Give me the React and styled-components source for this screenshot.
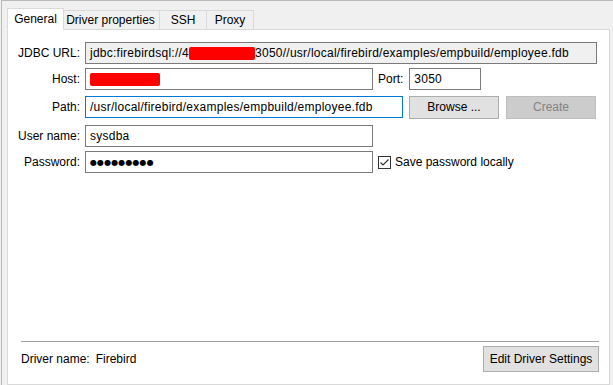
import styled, { createGlobalStyle } from "styled-components";

const GlobalStyle = createGlobalStyle`
  html, body {
    margin: 0;
    padding: 0;
    background: #f0f0f0;
    font-family: "Liberation Sans", Arial, sans-serif;
    font-size: 12px;
    color: #000;
  }
`;

const Frame = styled.div`
  width: 613px;
  height: 385px;
  box-sizing: border-box;
  border-top: 1px solid #b9b9b9;
  border-left: 1px solid #b9b9b9;
  margin-left: 1px;
  padding: 7px 4px 0 5px;
  display: flex;
  flex-direction: column;
  overflow: hidden;
`;

const TabStrip = styled.div`
  display: flex;
  align-items: flex-end;
  height: 22px;
  position: relative;
  z-index: 1;
  margin-bottom: -1px;
`;

const Tab = styled.div`
  box-sizing: border-box;
  height: ${(p) => (p.$active ? "22px" : "20px")};
  width: ${(p) => p.$w}px;
  padding: ${(p) => (p.$active ? "3px 0 0 0" : "2px 0 0 0")};
  text-align: center;
  border: 1px solid #d9d9d9;
  border-bottom: ${(p) => (p.$active ? "1px solid #fff" : "1px solid #d9d9d9")};
  border-left: ${(p) => (p.$first || p.$active ? "1px solid #d9d9d9" : "none")};
  background: ${(p) => (p.$active ? "#fff" : "#f0f0f0")};
  margin-right: ${(p) => (p.$active ? "-2px" : "0")};
  position: relative;
  z-index: ${(p) => (p.$active ? 2 : 1)};
`;

const Panel = styled.div`
  flex: 1;
  background: #fff;
  border: 1px solid #d9d9d9;
  display: flex;
  flex-direction: column;
  padding: 12px 0 0 0;
`;

const Form = styled.div`
  display: flex;
  flex-direction: column;
`;

const Row = styled.div`
  display: flex;
  align-items: center;
  margin-top: ${(p) => p.$gap || 0}px;
  height: 22px;
`;

const Label = styled.div`
  width: 72px;
  text-align: right;
  margin-right: 5px;
  white-space: nowrap;
`;

const InlineLabel = styled.div`
  margin: 0 6px 0 5px;
  white-space: nowrap;
`;

const Field = styled.div`
  box-sizing: border-box;
  width: ${(p) => p.$w}px;
  height: 22px;
  border: 1px solid ${(p) => (p.$focus ? "#0078d7" : "#7a7a7a")};
  background: ${(p) => (p.$readonly ? "#f0f0f0" : "#fff")};
  padding: 0 0 0 4px;
  display: flex;
  align-items: center;
  white-space: nowrap;
  overflow: hidden;
  letter-spacing: 0.25px;
`;

const Redacted = styled.span`
  display: inline-block;
  width: ${(p) => p.$w}px;
  height: 13px;
  background: #ff0000;
  border-radius: 2px;
`;

const Dots = styled.span`
  font-family: "DejaVu Sans", sans-serif;
  font-size: 8px;
  letter-spacing: 0.1px;
`;

const Button = styled.div`
  box-sizing: border-box;
  width: ${(p) => p.$w}px;
  height: ${(p) => p.$h || 23}px;
  border: 1px solid ${(p) => (p.$disabled ? "#bfbfbf" : "#adadad")};
  background: ${(p) => (p.$disabled ? "#cccccc" : "#e1e1e1")};
  color: ${(p) => (p.$disabled ? "#838383" : "#000")};
  display: flex;
  align-items: center;
  justify-content: center;
  margin-left: ${(p) => p.$ml || 0}px;
  white-space: nowrap;
`;

const CheckBox = styled.div`
  box-sizing: border-box;
  width: 13px;
  height: 13px;
  border: 1px solid #333;
  background: #fff;
  margin: 0 4px 0 5px;
  display: flex;
  align-items: center;
  justify-content: center;
`;

const Spacer = styled.div`
  flex: 1;
`;

const Footer = styled.div`
  margin: 0 10px 0 13px;
  border-top: 1px solid #a0a0a0;
  padding: 4px 0 12px 0;
  display: flex;
  align-items: center;
`;

const FooterLabel = styled.span`
  margin-right: 6px;
`;

export default function App() {
  return (
    <>
      <GlobalStyle />
      <Frame>
        <TabStrip>
          <Tab $active $first $w={57}>General</Tab>
          <Tab $w={98}>Driver properties</Tab>
          <Tab $w={47}>SSH</Tab>
          <Tab $w={47}>Proxy</Tab>
        </TabStrip>
        <Panel>
          <Form>
            <Row>
              <Label>JDBC URL:</Label>
              <Field $w={512} $readonly>
                jdbc:firebirdsql://4<Redacted $w={66} />3050//usr/local/firebird/examples/empbuild/employee.fdb
              </Field>
            </Row>
            <Row $gap={4}>
              <Label>Host:</Label>
              <Field $w={288}>
                <Redacted $w={70} />
              </Field>
              <InlineLabel>Port:</InlineLabel>
              <Field $w={72}>3050</Field>
            </Row>
            <Row $gap={6}>
              <Label>Path:</Label>
              <Field $w={318} $focus>/usr/local/firebird/examples/empbuild/employee.fdb</Field>
              <Button $w={90} $ml={6}>Browse ...</Button>
              <Button $w={90} $ml={7} $disabled>Create</Button>
            </Row>
            <Row $gap={7}>
              <Label>User name:</Label>
              <Field $w={288}>sysdba</Field>
            </Row>
            <Row $gap={4}>
              <Label>Password:</Label>
              <Field $w={288}>
                <Dots>●●●●●●●●●</Dots>
              </Field>
              <CheckBox>
                <svg width="11" height="11" viewBox="0 0 11 11">
                  <path d="M1.5 5.5 L4 8 L9.5 2.5" fill="none" stroke="#333" strokeWidth="1.2" />
                </svg>
              </CheckBox>
              <span>Save password locally</span>
            </Row>
          </Form>
          <Spacer />
          <Footer>
            <FooterLabel>Driver name:</FooterLabel>
            <span>Firebird</span>
            <Spacer />
            <Button $w={116} $h={26}>Edit Driver Settings</Button>
          </Footer>
        </Panel>
      </Frame>
    </>
  );
}
